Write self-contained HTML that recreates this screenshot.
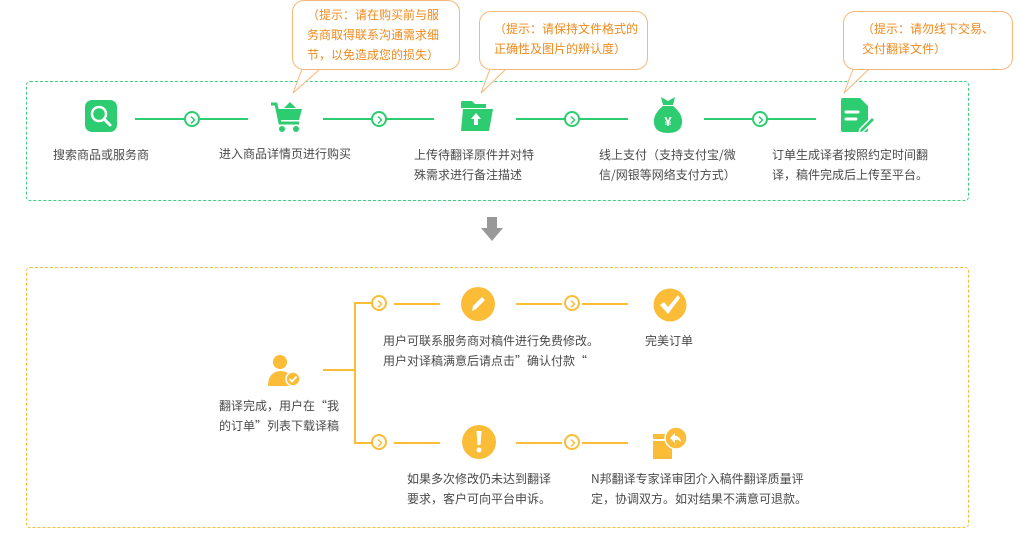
<!DOCTYPE html>
<html><head><meta charset="utf-8"><style>
*{margin:0;padding:0;box-sizing:border-box}
body{width:1020px;height:544px;background:#fff;position:relative;overflow:hidden;font-family:"Noto Sans CJK SC","Liberation Sans",sans-serif;font-size:12px;color:#4a4a4a}
.a{position:absolute}
.t{position:absolute;line-height:20px;white-space:nowrap}
.c{position:absolute;border:1px solid #f6b878;border-radius:12px;color:#f08a1c;line-height:20px;padding-left:14px;background:#fff}
.gl{position:absolute;height:2px;background:#2ecc71}
.ol{position:absolute;height:2px;background:#fbbd38}
.cg,.co{position:absolute;width:16px;height:16px;border-radius:50%;border:2px solid #2ecc71;background:#fff}
.co{border-color:#fbbd38}
.cg svg,.co svg{position:absolute;left:3px;top:2px}
</style></head><body>
<div class="a" style="left:26px;top:81px;width:943px;height:120px;border:1px dashed #3ccf7c;border-radius:4px"></div>
<svg class="a" style="left:0;top:0" width="1020" height="100">
<path d="M302 69 L293 93 L320 69" fill="#fff" stroke="#f6b878"/>
<path d="M490 69 L481 93 L506 69" fill="#fff" stroke="#f6b878"/>
<path d="M853 69 L844 93 L869 69" fill="#fff" stroke="#f6b878"/>
</svg>
<div class="c" style="left:292px;top:0;width:168px;height:70px;padding-top:4px">（提示：请在购买前与服<br>务商取得联系沟通需求细<br>节，以免造成您的损失）</div>
<div class="c" style="left:479px;top:11px;width:169px;height:59px;padding-top:7px">（提示：请保持文件格式的<br>正确性及图片的辨认度）</div>
<div class="c" style="left:843px;top:11px;width:170px;height:59px;padding-top:7px;padding-left:18px">（提示：请勿线下交易、<br>交付翻译文件）</div>
<svg class="a" style="left:0;top:0" width="1020" height="100">
<path d="M303 68 L318 68" stroke="#fff" stroke-width="2"/>
<path d="M491 68 L505 68" stroke="#fff" stroke-width="2"/>
<path d="M854 68 L868 68" stroke="#fff" stroke-width="2"/>
</svg>
<svg class="a" style="left:85px;top:100px" width="32" height="32"><rect width="32" height="32" rx="7" fill="#2ecc71"/><circle cx="14" cy="14" r="7" fill="none" stroke="#fff" stroke-width="2.5"/><path d="M19 19 L25 25" stroke="#fff" stroke-width="3" stroke-linecap="round"/></svg>
<svg class="a" style="left:270px;top:100px" width="34" height="34"><path d="M1 4 H6 L10 23 H29" fill="none" stroke="#2ecc71" stroke-width="3"/><path d="M7 9 H32 L29 20 H10 Z" fill="#2ecc71"/><path d="M14 8 L20 2 L26 8Z" fill="#2ecc71"/><circle cx="12" cy="29" r="3" fill="#2ecc71"/><circle cx="26" cy="29" r="3" fill="#2ecc71"/></svg>
<svg class="a" style="left:460px;top:100px" width="34" height="32"><path d="M1 3 Q1 1 3 1 H12 L15 4 H26 V8 H1Z" fill="#2ecc71"/><path d="M3 9 H33 L29 31 H1 Z" fill="#2ecc71"/><path d="M16 13 L11 19 H14 V25 H18 V19 H21Z" fill="#fff"/></svg>
<svg class="a" style="left:652px;top:96px" width="32" height="38"><path d="M9 1 L16 5 L23 1 L21 9 H11Z" fill="#2ecc71"/><path d="M11 10 H21 Q31 18 30 27 Q29 37 16 37 Q3 37 2 27 Q1 18 11 10Z" fill="#2ecc71"/><text x="16" y="30" fill="#fff" font-size="13" font-weight="bold" text-anchor="middle" font-family="Liberation Sans">¥</text></svg>
<svg class="a" style="left:840px;top:98px" width="36" height="36"><path d="M1 2 Q1 0 3 0 H20 L28 8 V32 Q28 34 26 34 H3 Q1 34 1 32Z" fill="#2ecc71"/><path d="M6 14 H18 M6 21 H16" stroke="#fff" stroke-width="3" stroke-linecap="round"/><path d="M20 31 L32 19 L35 22 L23 34 L19 35Z" fill="#2ecc71" stroke="#fff" stroke-width="1.5"/></svg>
<div class="gl" style="left:135px;top:118px;width:113px"></div>
<div class="gl" style="left:323px;top:118px;width:111px"></div>
<div class="gl" style="left:516px;top:118px;width:112px"></div>
<div class="gl" style="left:704px;top:118px;width:112px"></div>
<div class="cg" style="left:184px;top:111px"><svg width="8" height="10"><path d="M2 1.5 L5.5 5 L2 8.5" fill="none" stroke="#2ecc71" stroke-width="1.5"/></svg></div>
<div class="cg" style="left:371px;top:111px"><svg width="8" height="10"><path d="M2 1.5 L5.5 5 L2 8.5" fill="none" stroke="#2ecc71" stroke-width="1.5"/></svg></div>
<div class="cg" style="left:564px;top:111px"><svg width="8" height="10"><path d="M2 1.5 L5.5 5 L2 8.5" fill="none" stroke="#2ecc71" stroke-width="1.5"/></svg></div>
<div class="cg" style="left:752px;top:111px"><svg width="8" height="10"><path d="M2 1.5 L5.5 5 L2 8.5" fill="none" stroke="#2ecc71" stroke-width="1.5"/></svg></div>
<div class="t" style="left:53px;top:145px">搜索商品或服务商</div>
<div class="t" style="left:219px;top:144px">进入商品详情页进行购买</div>
<div class="t" style="left:414px;top:145px">上传待翻译原件并对特<br>殊需求进行备注描述</div>
<div class="t" style="left:599px;top:145px">线上支付（支持支付宝/微<br>信/网银等网络支付方式）</div>
<div class="t" style="left:772px;top:145px">订单生成译者按照约定时间翻<br>译，稿件完成后上传至平台。</div>
<svg class="a" style="left:480px;top:216px" width="24" height="26"><path d="M7 1 H17 V12 H23 L12 25 L1 12 H7Z" fill="#999"/></svg>
<div class="a" style="left:26px;top:267px;width:943px;height:261px;border:1px dashed #fbbd38;border-radius:4px"></div>
<svg class="a" style="left:267px;top:353px" width="34" height="34"><circle cx="13" cy="9" r="7" fill="#fbbd38"/><path d="M1 33 Q1 19 13 18 Q20 18 23 22 V33Z" fill="#fbbd38"/><circle cx="26" cy="26" r="7" fill="#fbbd38" stroke="#fff" stroke-width="1.5"/><path d="M22.5 26 L25 28.5 L29.5 23.5" fill="none" stroke="#fff" stroke-width="1.8"/></svg>
<div class="t" style="left:219px;top:396px">翻译完成，用户在“我<br>的订单”列表下载译稿</div>
<div class="ol" style="left:323px;top:369px;width:33px"></div>
<div class="a" style="left:354px;top:302px;width:2px;height:142px;background:#fbbd38"></div>
<div class="ol" style="left:354px;top:302px;width:18px"></div>
<div class="ol" style="left:354px;top:442px;width:18px"></div>
<div class="co" style="left:371px;top:295px"><svg width="8" height="10"><path d="M2 1.5 L5.5 5 L2 8.5" fill="none" stroke="#fbbd38" stroke-width="1.5"/></svg></div>
<div class="co" style="left:371px;top:434px"><svg width="8" height="10"><path d="M2 1.5 L5.5 5 L2 8.5" fill="none" stroke="#fbbd38" stroke-width="1.5"/></svg></div>
<div class="ol" style="left:394px;top:303px;width:46px"></div>
<div class="ol" style="left:394px;top:442px;width:46px"></div>
<div class="ol" style="left:516px;top:303px;width:46px"></div>
<div class="ol" style="left:516px;top:442px;width:46px"></div>
<div class="co" style="left:564px;top:295px"><svg width="8" height="10"><path d="M2 1.5 L5.5 5 L2 8.5" fill="none" stroke="#fbbd38" stroke-width="1.5"/></svg></div>
<div class="co" style="left:564px;top:434px"><svg width="8" height="10"><path d="M2 1.5 L5.5 5 L2 8.5" fill="none" stroke="#fbbd38" stroke-width="1.5"/></svg></div>
<div class="ol" style="left:582px;top:303px;width:46px"></div>
<div class="ol" style="left:582px;top:442px;width:46px"></div>
<svg class="a" style="left:461px;top:287px" width="34" height="34"><circle cx="17" cy="17" r="17" fill="#fbbd38"/><path d="M11 24 L12 19 L21 10 L24 13 L15 22Z" fill="#fff"/></svg>
<svg class="a" style="left:653px;top:288px" width="34" height="34"><circle cx="17" cy="17" r="16.5" fill="#fbbd38"/><path d="M7 17 L11 14 L15 19 L25 7 L27 10 L15 26Z" fill="#fff"/></svg>
<svg class="a" style="left:462px;top:425px" width="34" height="34"><circle cx="17" cy="17" r="17" fill="#fbbd38"/><path d="M14.5 6 H19.5 L18.5 20 H15.5Z" fill="#fff"/><circle cx="17" cy="25" r="2.5" fill="#fff"/></svg>
<svg class="a" style="left:652px;top:424px" width="38" height="36"><path d="M1 10 H14 V15 H1Z M1 17 H20 V35 H1Z" fill="#fbbd38"/><circle cx="24" cy="14" r="11" fill="#fbbd38" stroke="#fff" stroke-width="1.5"/><path d="M18 14 L23 9 V12 Q28 12 29 18 Q26 15 23 16 V19Z" fill="#fff"/></svg>
<div class="t" style="left:383px;top:331px">用户可联系服务商对稿件进行免费修改。<br>用户对译稿满意后请点击”确认付款“</div>
<div class="t" style="left:645px;top:331px">完美订单</div>
<div class="t" style="left:407px;top:469px">如果多次修改仍未达到翻译<br>要求，客户可向平台申诉。</div>
<div class="t" style="left:591px;top:469px">N邦翻译专家译审团介入稿件翻译质量评<br>定，协调双方。如对结果不满意可退款。</div>
</body></html>
